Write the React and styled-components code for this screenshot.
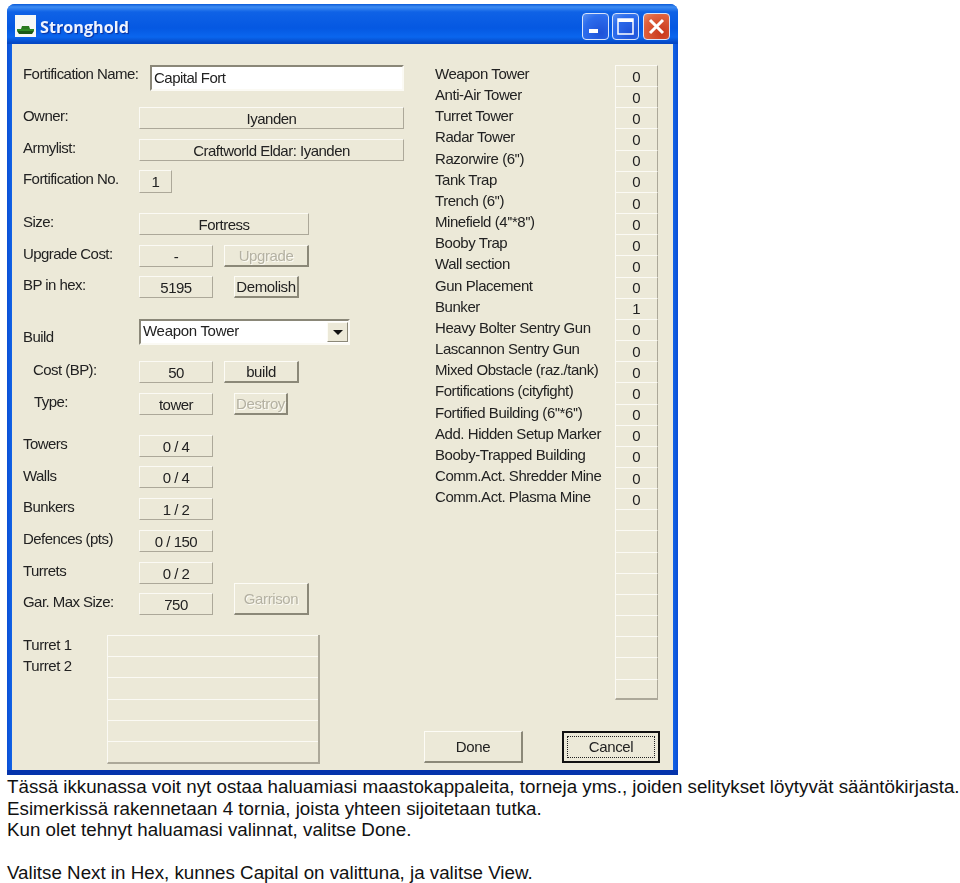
import styled, { createGlobalStyle } from "styled-components";

const GlobalStyle = createGlobalStyle`
  html, body {
    margin: 0;
    padding: 0;
    background: #fff;
  }
`;

const Page = styled.div`
  width: 960px;
  height: 883px;
  overflow: hidden;
`;

const Window = styled.div`
  margin: 4px 0 0 7px;
  width: 671px;
  height: 771px;
  box-sizing: border-box;
  border-radius: 8px 8px 0 0;
  background: linear-gradient(90deg, #0a4fd6 0, #1263e6 5px, #1263e6 666px, #0a4fd6 100%);
  border-bottom: 5px solid #0534ac;
  display: flex;
  flex-direction: column;
  font-family: "Liberation Sans", Arial, sans-serif;
  font-size: 15px;
  color: #222;
  filter: blur(0.3px);
`;

const TitleBar = styled.div`
  height: 40px;
  flex: none;
  box-sizing: border-box;
  padding: 0 8px 0 8px;
  border-radius: 8px 8px 0 0;
  background: linear-gradient(180deg, #0a5ad8 0, #3d8cf2 3px, #0f62e6 8px, #0558e2 24px, #0a66ee 33px, #0447c4 39px);
  display: flex;
  align-items: center;
  gap: 4px;
`;

const AppIcon = styled.svg`
  width: 21px;
  height: 22px;
  flex: none;
  margin-top: 3px;
`;

const Title = styled.div`
  flex: 1;
  margin-top: 5px;
  font-family: "Open Sans", "Liberation Sans", sans-serif;
  font-size: 16.2px;
  font-weight: 700;
  color: #eef4ff;
  text-shadow: 1px 1px 1px #0a2f9c;
`;

const CapButton = styled.div`
  width: 27px;
  height: 27px;
  box-sizing: border-box;
  margin-left: ${(p) => p.$ml || 0}px;
  margin-top: 5px;
  border: 1px solid #d8e4fa;
  border-radius: 4px;
  background: ${(p) =>
    p.$close
      ? "radial-gradient(circle at 70% 75%, #c8361a, #e0623e 70%, #ea8a68)"
      : "radial-gradient(circle at 70% 75%, #1e52d8, #2c6cec 65%, #5a92f2)"};
  display: flex;
  align-items: center;
  justify-content: center;
`;

const Client = styled.div`
  flex: 1;
  margin: 0 5px;
  box-sizing: border-box;
  padding: 21px 0 0 11px;
  background: #ece9d8;
  display: flex;
  align-items: flex-start;
`;

const LeftCol = styled.div`
  width: 401px;
  flex: none;
`;

const Row = styled.div`
  display: flex;
  align-items: flex-start;
  margin-top: ${(p) => p.$gap || 0}px;
`;

const Label = styled.div`
  width: 116px;
  flex: none;
  box-sizing: border-box;
  height: 18px;
  line-height: 18px;
  white-space: nowrap;
  padding-left: ${(p) => p.$indent || 0}px;
  padding-top: ${(p) => p.$dy || 0}px;
  letter-spacing: -0.55px;
`;

const Value = styled.div`
  width: ${(p) => p.$w}px;
  height: ${(p) => p.$h || 22}px;
  flex: none;
  box-sizing: border-box;
  border: 1px solid;
  border-color: #fbfaf4 #aca899 #aca899 #fbfaf4;
  display: flex;
  align-items: center;
  justify-content: center;
  white-space: nowrap;
  letter-spacing: -0.5px;
`;

const NameInput = styled.div`
  width: 254px;
  height: 26px;
  margin-left: 11px;
  box-sizing: border-box;
  background: #fff;
  border: 2px solid;
  border-color: #8a8778 #fbfaf4 #fbfaf4 #8a8778;
  padding-left: 2px;
  line-height: 22px;
  letter-spacing: -0.5px;
`;

const Button = styled.div`
  width: ${(p) => p.$w}px;
  height: ${(p) => p.$h || 22}px;
  flex: none;
  box-sizing: border-box;
  margin-left: ${(p) => p.$ml || 0}px;
  margin-top: ${(p) => p.$mt || 0}px;
  background: #ece9d8;
  border: 1px solid;
  border-width: 1px 2px 2px 1px;
  border-color: #fdfcf6 #8b8878 #8b8878 #fdfcf6;
  display: flex;
  align-items: center;
  justify-content: center;
  white-space: nowrap;
  letter-spacing: -0.4px;
  color: ${(p) => (p.$disabled ? "#b4b1a2" : "#222")};
  ${(p) => p.$disabled && "text-shadow: 1px 1px 0 #fbfaf4;"}
`;

const Combo = styled.div`
  width: 211px;
  height: 26px;
  box-sizing: border-box;
  background: #fff;
  border: 2px solid;
  border-color: #8a8778 #fbfaf4 #fbfaf4 #8a8778;
  display: flex;
  justify-content: space-between;
  padding-left: 2px;
  line-height: 19px;
  letter-spacing: -0.3px;
`;

const ComboArrow = styled.div`
  width: 21px;
  height: 20px;
  box-sizing: border-box;
  margin-top: 1px;
  background: #ece9d8;
  border: 1px solid;
  border-color: #fdfcf6 #8b8878 #8b8878 #fdfcf6;
  display: flex;
  align-items: center;
  justify-content: center;
  &::after {
    content: "";
    border-left: 5px solid transparent;
    border-right: 5px solid transparent;
    border-top: 5px solid #111;
  }
`;

const TurretLabels = styled.div`
  width: 84px;
  flex: none;
  padding-top: 1px;
`;

const TurretLabel = styled.div`
  height: 21px;
  line-height: 18px;
  letter-spacing: -0.4px;
`;

const ListBox = styled.div`
  width: 213px;
  height: 129px;
  box-sizing: border-box;
  border-right: 2px solid #aca899;
  border-bottom: 2px solid #aca899;
  border-left: 1px solid #fbfaf4;
`;

const ListRow = styled.div`
  height: 21.2px;
  box-sizing: border-box;
  border-top: 1px solid #fbfaf4;
`;

const RightCol = styled.div`
  width: 240px;
  flex: none;
`;

const Table = styled.div`
  padding-left: 11px;
`;

const TableRow = styled.div`
  height: 21.17px;
  display: flex;
`;

const ItemName = styled.div`
  width: 180px;
  flex: none;
  height: 18px;
  line-height: 18px;
  white-space: nowrap;
  letter-spacing: -0.45px;
`;

const Cell = styled.div`
  width: 43px;
  flex: none;
  box-sizing: border-box;
  border-top: 1px solid #fbfaf4;
  border-left: 1px solid #fbfaf4;
  border-right: 1px solid #aca899;
  border-bottom: ${(p) => (p.$last ? "2px solid #aca899" : "0")};
  display: flex;
  align-items: center;
  justify-content: center;
`;

const ButtonBar = styled.div`
  display: flex;
  margin-top: 31px;
  gap: 39px;
`;

const DialogButton = styled(Button)`
  height: 32px;
`;

const CancelButton = styled.div`
  width: 98px;
  height: 32px;
  box-sizing: border-box;
  border: 2px solid #111;
  padding: 3px;
  background: #ece9d8;
  display: flex;
`;

const FocusRing = styled.div`
  flex: 1;
  border: 1px dotted #222;
  display: flex;
  align-items: center;
  justify-content: center;
  letter-spacing: -0.4px;
`;

const Caption = styled.div`
  padding: 1px 0 0 7px;
  font-family: "Liberation Sans", Arial, sans-serif;
  font-size: 18.75px;
  line-height: 21.5px;
  color: #111;
  white-space: pre;
`;

const items = [
  ["Weapon Tower", "0"],
  ["Anti-Air Tower", "0"],
  ["Turret Tower", "0"],
  ["Radar Tower", "0"],
  ["Razorwire (6'')", "0"],
  ["Tank Trap", "0"],
  ["Trench (6'')", "0"],
  ["Minefield (4''*8'')", "0"],
  ["Booby Trap", "0"],
  ["Wall section", "0"],
  ["Gun Placement", "0"],
  ["Bunker", "1"],
  ["Heavy Bolter Sentry Gun", "0"],
  ["Lascannon Sentry Gun", "0"],
  ["Mixed Obstacle (raz./tank)", "0"],
  ["Fortifications (cityfight)", "0"],
  ["Fortified Building (6''*6'')", "0"],
  ["Add. Hidden Setup Marker", "0"],
  ["Booby-Trapped Building", "0"],
  ["Comm.Act. Shredder Mine", "0"],
  ["Comm.Act. Plasma Mine", "0"],
];

const tableRows = [...items];
while (tableRows.length < 30) tableRows.push(["", ""]);

const App = () => {
  return (
    <Page>
      <GlobalStyle />
      <Window>
        <TitleBar>
          <AppIcon viewBox="0 0 21 22">
            <rect width="21" height="22" fill="#f6f8f6" />
            <path d="M2 16 L19 16 L17 19 L4 19 Z" fill="#1c5a16" />
            <path d="M2 14 L19 14 L19 16 L2 16 Z" fill="#2f8a24" />
            <path d="M7 11 L14 11 L15 14 L6 14 Z" fill="#2a7a20" />
          </AppIcon>
          <Title>Stronghold</Title>
          <CapButton>
            <svg width="25" height="25" viewBox="0 0 25 25">
              <rect x="6" y="15" width="9" height="4" fill="#fff" />
            </svg>
          </CapButton>
          <CapButton $ml={-1}>
            <svg width="25" height="25" viewBox="0 0 25 25">
              <rect x="5" y="5" width="15" height="15" fill="none" stroke="#fff" strokeWidth="1.5" />
              <rect x="5" y="5" width="15" height="3" fill="#fff" />
            </svg>
          </CapButton>
          <CapButton $close>
            <svg width="25" height="25" viewBox="0 0 25 25">
              <path d="M6 6 L19 19 M19 6 L6 19" stroke="#fff" strokeWidth="3" />
            </svg>
          </CapButton>
        </TitleBar>
        <Client>
          <LeftCol>
            <Row>
              <Label>Fortification Name:</Label>
              <NameInput>Capital Fort</NameInput>
            </Row>
            <Row $gap={16}>
              <Label>Owner:</Label>
              <Value $w={265}>Iyanden</Value>
            </Row>
            <Row $gap={10}>
              <Label>Armylist:</Label>
              <Value $w={265}>Craftworld Eldar: Iyanden</Value>
            </Row>
            <Row $gap={9}>
              <Label>Fortification No.</Label>
              <Value $w={33} $h={23}>1</Value>
            </Row>
            <Row $gap={20}>
              <Label>Size:</Label>
              <Value $w={170}>Fortress</Value>
            </Row>
            <Row $gap={10}>
              <Label>Upgrade Cost:</Label>
              <Value $w={74}>-</Value>
              <Button $w={85} $ml={11} $disabled>Upgrade</Button>
            </Row>
            <Row $gap={9}>
              <Label>BP in hex:</Label>
              <Value $w={74}>5195</Value>
              <Button $w={65} $ml={21}>Demolish</Button>
            </Row>
            <Row $gap={21}>
              <Label $dy={9}>Build</Label>
              <Combo>
                Weapon Tower
                <ComboArrow />
              </Combo>
            </Row>
            <Row $gap={16}>
              <Label $indent={10}>Cost (BP):</Label>
              <Value $w={74}>50</Value>
              <Button $w={75} $ml={11}>build</Button>
            </Row>
            <Row $gap={10}>
              <Label $indent={11}>Type:</Label>
              <Value $w={74}>tower</Value>
              <Button $w={54} $ml={21} $disabled>Destroy</Button>
            </Row>
            <Row $gap={20}>
              <Label>Towers</Label>
              <Value $w={74}>0 / 4</Value>
            </Row>
            <Row $gap={9}>
              <Label $dy={1}>Walls</Label>
              <Value $w={74}>0 / 4</Value>
            </Row>
            <Row $gap={10}>
              <Label>Bunkers</Label>
              <Value $w={74}>1 / 2</Value>
            </Row>
            <Row $gap={10}>
              <Label>Defences (pts)</Label>
              <Value $w={74}>0 / 150</Value>
            </Row>
            <Row $gap={10}>
              <Label>Turrets</Label>
              <Value $w={74}>0 / 2</Value>
            </Row>
            <Row $gap={9}>
              <Label>Gar. Max Size:</Label>
              <Value $w={74}>750</Value>
              <Button $w={75} $h={32} $ml={21} $mt={-10} $disabled>Garrison</Button>
            </Row>
            <Row $gap={20}>
              <TurretLabels>
                <TurretLabel>Turret 1</TurretLabel>
                <TurretLabel>Turret 2</TurretLabel>
              </TurretLabels>
              <ListBox>
                {[0, 1, 2, 3, 4, 5].map((i) => (
                  <ListRow key={i} />
                ))}
              </ListBox>
            </Row>
          </LeftCol>
          <RightCol>
            <Table>
              {tableRows.map(([name, value], i) => (
                <TableRow key={i}>
                  <ItemName>{name}</ItemName>
                  <Cell $last={i === tableRows.length - 1}>{value}</Cell>
                </TableRow>
              ))}
            </Table>
            <ButtonBar>
              <DialogButton $w={99}>Done</DialogButton>
              <CancelButton>
                <FocusRing>Cancel</FocusRing>
              </CancelButton>
            </ButtonBar>
          </RightCol>
        </Client>
      </Window>
      <Caption>
        {"Tässä ikkunassa voit nyt ostaa haluamiasi maastokappaleita, torneja yms., joiden selitykset löytyvät sääntökirjasta.\n"}
        {"Esimerkissä rakennetaan 4 tornia, joista yhteen sijoitetaan tutka.\n"}
        {"Kun olet tehnyt haluamasi valinnat, valitse Done.\n\n"}
        {"Valitse Next in Hex, kunnes Capital on valittuna, ja valitse View."}
      </Caption>
    </Page>
  );
};

export default App;
